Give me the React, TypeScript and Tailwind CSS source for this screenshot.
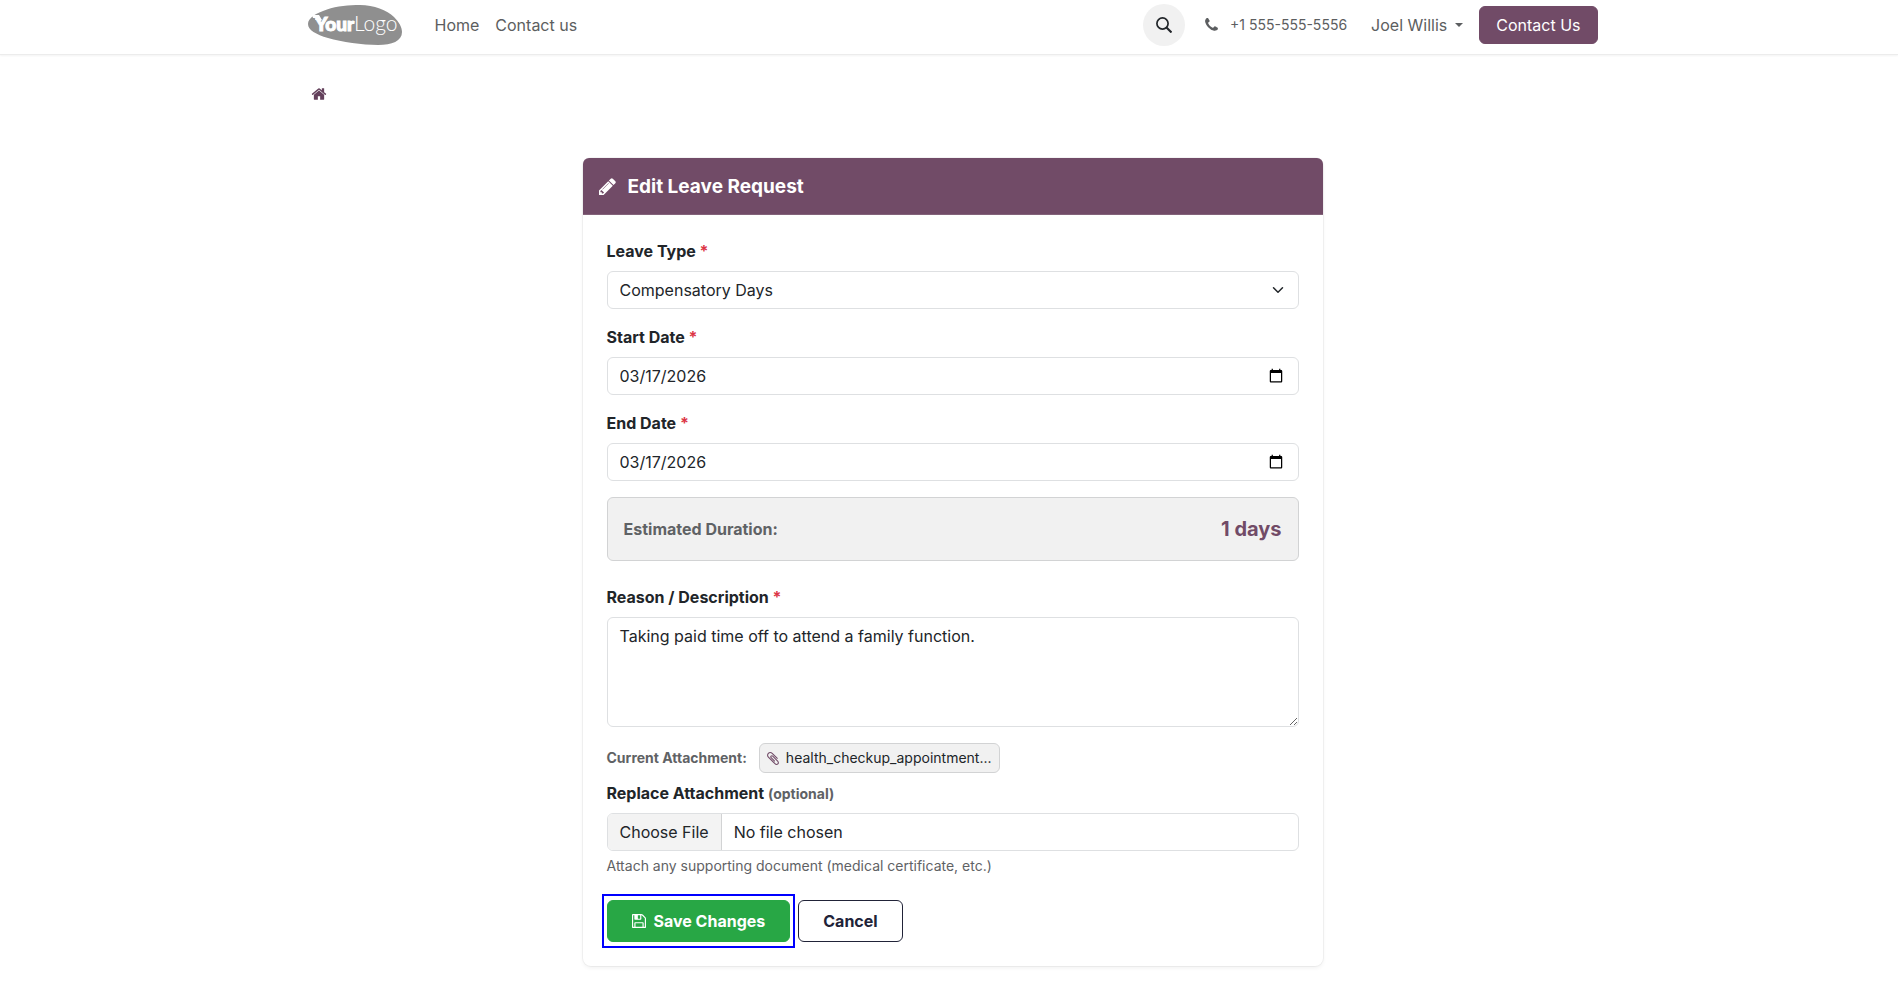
import React, { useState } from "react";

interface GlyphProps {
  path: string;
  viewBox?: string;
  className?: string;
}

interface FieldLabelProps {
  htmlFor: string;
  children: React.ReactNode;
}

const ICONS = {
  home: "M1472 992v480q0 26-19 45t-45 19h-384v-384h-256v384h-384q-26 0-45-19t-19-45v-480q0-1 .5-3t.5-3l575-474 575 474q1 2 1 6zm223-69l-62 74q-8 9-21 11h-3q-13 0-21-7l-692-577-692 577q-12 8-24 7-13-2-21-11l-62-74q-8-10-7-23.5t11-21.5l719-599q32-26 76-26t76 26l244 204v-195q0-14 9-23t23-9h192q14 0 23 9t9 23v408l219 182q10 8 11 21.5t-7 23.5z",
  pencil:
    "M491 1536l91-91-235-235-91 91v107h128v128h107zm523-928q0-22-22-22-10 0-17 7l-542 542q-7 7-7 17 0 22 22 22 10 0 17-7l542-542q7-7 7-17zm-54-192l416 416-832 832h-416v-416zm683 96q0 53-37 90l-166 166-416-416 166-165q36-38 90-38 53 0 91 38l235 234q37 39 37 91z",
  phone:
    "M1600 1240q0 27-10 70.5t-21 68.5q-21 50-122 106-94 51-186 51-27 0-53-3.5t-57-12.5-47-14.5-55.5-20.5-49.5-18q-98-35-175-83-127-79-264-216t-216-264q-48-77-83-175-3-9-18-49.5t-20.5-55.5-14.5-47-12.5-57-3.5-53q0-92 51-186 56-101 106-122 25-11 68.5-21t70.5-10q14 0 21 3 18 6 53 76 11 19 30 54t35 63.5 31 53.5q3 4 17.5 25t21.5 35.5 7 28.5q0 20-28.5 50t-62 55-62 53-28.5 46q0 9 5 22.5t8.5 20.5 14 24 11.5 19q76 137 174 235t235 174q2 1 19 11.5t24 14 20.5 8.5 22.5 5q18 0 46-28.5t53-62 55-62 50-28.5q14 0 28.5 7t35.5 21.5 25 17.5q25 15 53.5 31t63.5 35 54 30q70 35 76 53 3 7 3 21z",
  floppy:
    "M512 1536h768v-384h-768v384zm896 0h128v-896q0-14-10-38.5t-20-34.5l-281-281q-10-10-34-20t-39-10v416q0 40-28 68t-68 28h-576q-40 0-68-28t-28-68v-416h-128v1280h128v-416q0-40 28-68t68-28h832q40 0 68 28t28 68v416zm-384-928v-320q0-13-9.5-22.5t-22.5-9.5h-192q-13 0-22.5 9.5t-9.5 22.5v320q0 13 9.5 22.5t22.5 9.5h192q13 0 22.5-9.5t9.5-22.5zm640 32v928q0 40-28 68t-68 28h-1344q-40 0-68-28t-28-68v-1344q0-40 28-68t68-28h928q40 0 88 20t76 48l280 280q28 28 48 76t20 88z",
  paperclip:
    "M1596 1385q0 117-79 196t-196 79q-135 0-235-100l-777-776q-113-115-113-271 0-159 110-270t269-111q158 0 273 113l605 606q10 10 10 22 0 16-30.5 46.5t-46.5 30.5q-13 0-23-10l-606-607q-79-77-181-77-106 0-179 75t-73 181q0 105 76 181l776 777q63 63 145 63 64 0 106-42t42-106q0-82-63-145l-581-581q-26-24-60-24-29 0-48 19t-19 48q0 32 25 59l410 410q10 10 10 22 0 16-31 47t-47 31q-12 0-22-10l-410-410q-63-61-63-149 0-82 57-139t139-57q88 0 149 63l581 581q100 98 100 235z",
};

const LEAVE_TYPES = ["Compensatory Days", "Paid Time Off", "Sick Time Off", "Unpaid"];

const CONTROL =
  "block w-full h-[38px] px-3 rounded-md border border-[#dee0e2] bg-white text-base text-[#212529]";

const DATE_PARTS =
  "[&::-webkit-datetime-edit-month-field]:p-0 [&::-webkit-datetime-edit-day-field]:p-0 [&::-webkit-datetime-edit-year-field]:p-0";

const Glyph: React.FC<GlyphProps> = ({
  path,
  viewBox = "0 0 1792 1792",
  className,
}) => (
  <svg viewBox={viewBox} className={className} fill="currentColor" aria-hidden="true">
    <path d={path} />
  </svg>
);

const Logo = () => (
  <svg width="95" height="40" viewBox="0 0 95 40" role="img" aria-label="Your Logo">
    <path
      d="M0 19C0 13 8 8 19 4.500C29 1 41 0 52 0C66 0 79 5 86 12C91 17 94 22 94 27C94 36 84 40 70 40C54 40 34 37 20 33C8 29.500 0 25 0 19Z"
      fill="#8f8f8f"
    />
    <path d="M4 10h7l3 5-3 2-2-2H7l1-2H5z" fill="#fff" />
    <text
      x="7"
      y="26"
      fill="#fff"
      stroke="#fff"
      strokeWidth="1"
      fontFamily="Lato, sans-serif"
      fontWeight="900"
      fontSize="19"
    >
      Your
    </text>
    <text
      x="46"
      y="26"
      fill="#fff"
      fontFamily="Lato, sans-serif"
      fontWeight="300"
      fontSize="21"
    >
      Logo
    </text>
  </svg>
);

const FieldLabel: React.FC<FieldLabelProps> = ({ htmlFor, children }) => (
  <label htmlFor={htmlFor} className="block mb-2 font-bold">
    {children} <span className="text-[#dc3545]">*</span>
  </label>
);

const SiteHeader = () => (
  <header className="border-b border-[#ececec] ps-[7px] shadow-[0_1px_2px_rgba(0,0,0,0.05)]">
    <div className="flex items-center justify-between w-full max-w-[1322px] px-4 pt-1 pb-2 mx-auto text-[#5c5e60]">
      <div className="flex items-center">
        <a href="#" className="me-8">
          <Logo />
        </a>
        <nav className="flex gap-4">
          <a href="#">Home</a>
          <a href="#">Contact us</a>
        </nav>
      </div>

      <div className="flex items-center">
        <button
          type="button"
          aria-label="Search"
          className="flex items-center justify-center w-[42px] h-[42px] rounded-full bg-[#f1f1f1] text-[#212529] me-5"
        >
          <svg width="16" height="16" viewBox="0 0 16 16" fill="none" stroke="currentColor" aria-hidden="true">
            <circle cx="6.500" cy="6.500" r="5.600" strokeWidth="1.700" />
            <path d="M10.500 10.500l5 5" strokeWidth="2.100" />
          </svg>
        </button>
        <a href="tel:+15555555556" className="flex items-center text-sm me-6">
          <Glyph path={ICONS.phone} viewBox="192 128 1408 1536" className="w-[13px] h-[14px] me-3" />
          +1 555-555-5556
        </a>
        <button type="button" className="flex items-center gap-2 me-4">
          Joel Willis
          <svg width="8" height="4" viewBox="0 0 8 4" fill="currentColor" aria-hidden="true">
            <path d="M0 0h8L4 4z" />
          </svg>
        </button>
        <a
          href="#"
          className="h-[38px] px-4 leading-9 border border-[#714b67] rounded-md bg-[#714b67] text-white"
        >
          Contact Us
        </a>
      </div>
    </div>
  </header>
);

const LeaveForm = () => {
  const [leaveType, setLeaveType] = useState(LEAVE_TYPES[0]);
  const [startDate, setStartDate] = useState("2026-03-17");
  const [endDate, setEndDate] = useState("2026-03-17");
  const [reason, setReason] = useState(
    "Taking paid time off to attend a family function.",
  );

  const days =
    Math.round((Date.parse(endDate) - Date.parse(startDate)) / 86400000) + 1;

  return (
    <form className="p-6" onSubmit={(e) => e.preventDefault()}>
      <div className="mb-4">
        <FieldLabel htmlFor="leave-type">Leave Type</FieldLabel>
        <div className="relative">
          <select
            id="leave-type"
            value={leaveType}
            onChange={(e) => setLeaveType(e.target.value)}
            className={`${CONTROL} appearance-none`}
          >
            {LEAVE_TYPES.map((type) => (
              <option key={type}>{type}</option>
            ))}
          </select>
          <svg
            viewBox="0 0 16 16"
            className="absolute w-3 h-3 pointer-events-none right-[15px] top-[13px]"
            fill="none"
            stroke="#212529"
            strokeWidth="2"
            strokeLinecap="round"
            strokeLinejoin="round"
            aria-hidden="true"
          >
            <path d="m2 5 6 6 6-6" />
          </svg>
        </div>
      </div>

      <div className="mb-4">
        <FieldLabel htmlFor="start-date">Start Date</FieldLabel>
        <input
          id="start-date"
          type="date"
          value={startDate}
          onChange={(e) => setStartDate(e.target.value)}
          className={`${CONTROL} ${DATE_PARTS}`}
        />
      </div>

      <div className="mb-4">
        <FieldLabel htmlFor="end-date">End Date</FieldLabel>
        <input
          id="end-date"
          type="date"
          value={endDate}
          onChange={(e) => setEndDate(e.target.value)}
          className={`${CONTROL} ${DATE_PARTS}`}
        />
      </div>

      <div className="flex items-center justify-between h-16 px-4 mb-6 font-bold border rounded-md border-[#d2d3d4] bg-[#f1f1f1]">
        <span className="text-[#5f6265]">Estimated Duration:</span>
        <span className="text-xl text-[#714b67]">{days || 0} days</span>
      </div>

      <div className="mb-4">
        <FieldLabel htmlFor="reason">Reason / Description</FieldLabel>
        <textarea
          id="reason"
          rows={4}
          value={reason}
          onChange={(e) => setReason(e.target.value)}
          className="block w-full px-3 py-1.5 rounded-md border border-[#dee0e2] bg-white text-base text-[#212529]"
        />
      </div>

      <div className="flex items-center gap-3 mb-2 text-sm">
        <span className="font-bold text-[#5f6265]">Current Attachment:</span>
        <a
          href="#"
          className="flex items-center h-[30px] px-[7px] border rounded-md border-[#d2d3d4] bg-[#f1f1f1]"
        >
          <Glyph
            path={ICONS.paperclip}
            viewBox="196 128 1408 1536"
            className="w-3 h-[13px] me-[7px] text-[#714b67]"
          />
          health_checkup_appointment...
        </a>
      </div>

      <div className="mb-6">
        <label htmlFor="attachment" className="block mb-2 font-bold">
          Replace Attachment{" "}
          <span className="text-sm text-[#5f6265]">(optional)</span>
        </label>
        <input
          id="attachment"
          type="file"
          className="block w-full h-[38px] rounded-md border border-[#dee0e2] bg-white text-base file:h-9 file:px-3 file:me-3 file:border-0 file:border-r file:border-solid file:border-[#d2d3d4] file:bg-[#f3f3f3] file:text-[#212529]"
        />
        <p className="mt-1 text-sm leading-[21px] text-[#5f6265]">
          Attach any supporting document (medical certificate, etc.)
        </p>
      </div>

      <div className="flex gap-2 font-bold">
        <button
          type="submit"
          className="relative flex items-center h-[42px] px-6 border border-[#28a745] rounded-md bg-[#28a745] text-white"
        >
          <Glyph
            path={ICONS.floppy}
            viewBox="128 128 1536 1536"
            className="w-[14px] h-[14px] me-2"
          />
          Save Changes
          <span className="absolute border-2 pointer-events-none -inset-x-[6px] -inset-y-[7px] border-[#0000ff]" />
        </button>
        <button
          type="button"
          className="h-[42px] px-6 border rounded-md border-[#212338] bg-white text-[#212338]"
        >
          Cancel
        </button>
      </div>
    </form>
  );
};

const App = () => (
  <div className="min-h-screen bg-white text-base text-[#212529] font-['Inter','Open_Sans',sans-serif]">
    <SiteHeader />

    <main className="ps-[7px]">
      <div className="w-full max-w-[1322px] px-4 mx-auto">
        <nav
          aria-label="Breadcrumb"
          className="flex items-center pt-[31px] pb-14 ms-[3px] text-[#63405b]"
        >
          <a href="#" aria-label="Home">
            <Glyph path={ICONS.home} className="w-4 h-4" />
          </a>
        </nav>

        <section className="w-full max-w-[740px] mx-auto rounded-lg bg-white shadow-[0_0_0_1px_rgba(0,0,0,0.04),0_2px_4px_rgba(0,0,0,0.06)]">
          <div className="flex items-center h-[57px] px-4 text-white border-b rounded-t-md border-[#83637a] bg-[#714b67]">
            <Glyph
              path={ICONS.pencil}
              viewBox="128 128 1536 1536"
              className="w-[17px] h-[17px] me-3"
            />
            <h1 className="text-[19px] leading-[25px] font-bold">Edit Leave Request</h1>
          </div>
          <LeaveForm />
        </section>
      </div>
    </main>
  </div>
);

export default App;
